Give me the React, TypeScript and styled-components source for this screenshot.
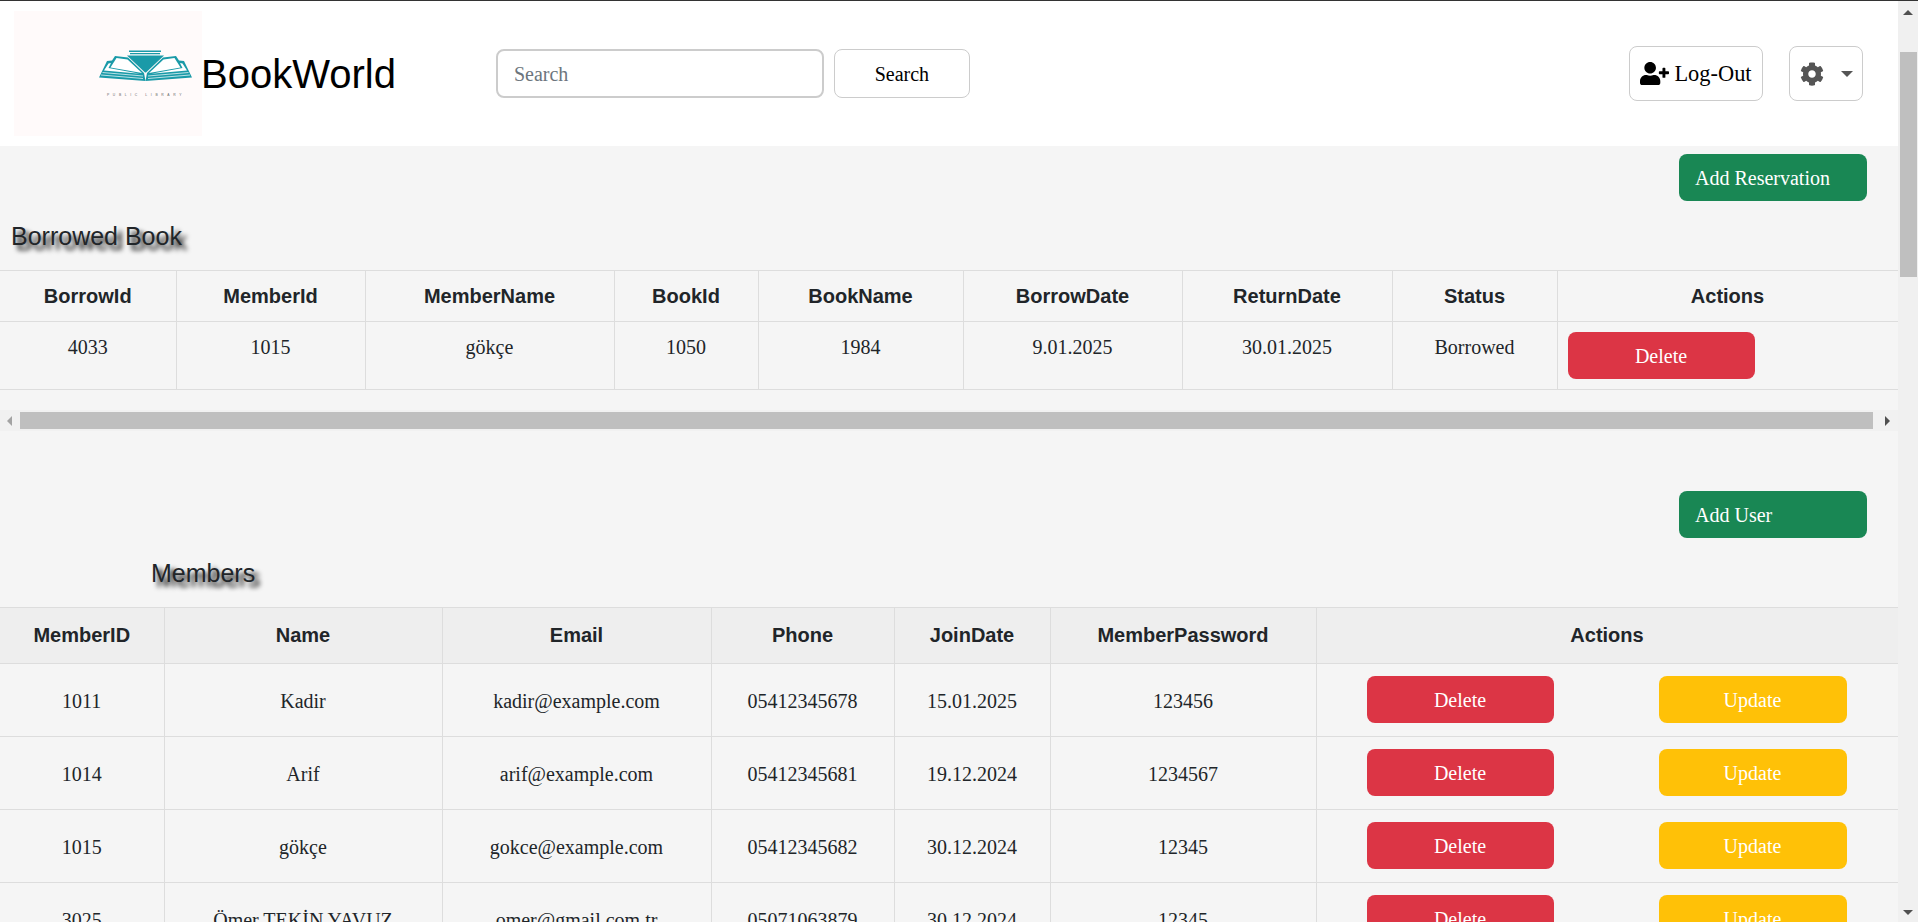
import styled, { createGlobalStyle } from "styled-components";
import { FaCog, FaUserPlus } from "react-icons/fa";

const GlobalStyle = createGlobalStyle`
  * {
    box-sizing: border-box;
  }

  html,
  body {
    margin: 0;
    height: 100%;
    overflow: hidden;
  }

  body {
    font-family: "Liberation Serif", "Times New Roman", serif;
    font-size: 20px;
    line-height: 1.5;
    color: #212529;
    background: #f5f5f5;
  }
`;

const Page = styled.div`
  display: flex;
  height: 922px;
  border-top: 1px solid #333;
`;

const Main = styled.div`
  flex: 1;
  min-width: 0;
  overflow: hidden;
`;

const VScroll = styled.div`
  width: 20px;
  flex: none;
  display: flex;
  flex-direction: column;
  align-items: center;
  padding: 9px 0 7px;
  background: #f0f0f0;
`;

const ArrowUp = styled.span`
  border: 5px solid transparent;
  border-top: 0;
  border-bottom-color: #505050;
`;

const ArrowDown = styled.span`
  margin-top: auto;
  border: 5px solid transparent;
  border-bottom: 0;
  border-top-color: #505050;
`;

const VThumb = styled.div`
  width: 17px;
  height: 225px;
  margin-top: 37px;
  margin-left: 1px;
  background: #bfbfbf;
`;

const Nav = styled.header`
  display: flex;
  align-items: center;
  height: 145px;
  padding: 0 35px 0 14px;
  background: #fff;
`;

const LogoBox = styled.svg`
  display: block;
  width: 188px;
  height: 125px;
  flex: none;
  background: #fffafa;
`;

const Brand = styled.span`
  margin-left: -1px;
  font-family: "Liberation Sans", Arial, sans-serif;
  font-size: 40px;
  line-height: 48px;
  color: #000;
`;

const SearchForm = styled.form`
  display: flex;
  gap: 10px;
  margin-left: 100px;
`;

const SearchInput = styled.input`
  width: 328px;
  height: 49px;
  padding: 2px 16px 0;
  border: 2px solid #ccc;
  border-radius: 8px;
  background: #fff;
  font: inherit;
  outline: none;

  &::placeholder {
    color: #6c757d;
    opacity: 1;
  }
`;

const OutlineButton = styled.button`
  display: flex;
  align-items: center;
  justify-content: center;
  border: 1px solid #ccc;
  border-radius: 8px;
  background: #fff;
  color: #000;
  font: inherit;
`;

const SearchButton = styled(OutlineButton)`
  width: 136px;
  height: 49px;
`;

const NavActions = styled.div`
  display: flex;
  gap: 26px;
  margin-left: auto;
`;

const LogoutButton = styled(OutlineButton)`
  gap: 5px;
  width: 134px;
  height: 55px;
  font-size: 22.4px;
`;

const SettingsButton = styled(OutlineButton)`
  gap: 17px;
  width: 74px;
  height: 55px;
  color: #555;
`;

const Caret = styled.span`
  border: 6px solid transparent;
  border-bottom: 0;
  border-top-color: #555;
`;

const AddRow = styled.div<{ $top: number }>`
  display: flex;
  justify-content: flex-end;
  margin-top: ${(p) => p.$top}px;
  padding-right: 31px;
`;

const Button = styled.button<{ $kind: "add" | "delete" | "update" }>`
  width: ${(p) => (p.$kind === "delete" ? 187 : 188)}px;
  height: 47px;
  padding: 0 16px;
  border: 0;
  border-radius: 8px;
  color: #fff;
  font: inherit;
  text-align: ${(p) => (p.$kind === "add" ? "left" : "center")};
  background: ${(p) =>
    p.$kind === "add" ? "#198754" : p.$kind === "delete" ? "#dc3545" : "#ffc107"};
`;

const Title = styled.h2<{ $indent: number }>`
  margin: 20px 0 0;
  padding-left: ${(p) => p.$indent}px;
  font-family: "Liberation Sans", Arial, sans-serif;
  font-size: 25px;
  font-weight: 400;
  line-height: 30px;
  text-shadow: 5px 5px 5px #000;
`;

const Table = styled.table`
  width: 1898px;
  margin-top: 19px;
  border-collapse: collapse;
  table-layout: fixed;
`;

const Th = styled.th<{ $shaded?: boolean }>`
  height: ${(p) => (p.$shaded ? 56 : 51)}px;
  padding: 0 0 ${(p) => (p.$shaded ? 2 : 0)}px;
  border: 1px solid #ddd;
  background: ${(p) => (p.$shaded ? "#eee" : "transparent")};
  font-family: "Liberation Sans", Arial, sans-serif;
  font-size: 20px;
  font-weight: 700;
  text-align: center;

  &:first-child {
    border-left: 0;
  }
`;

const Td = styled.td<{ $top?: boolean }>`
  height: ${(p) => (p.$top ? 68 : 73)}px;
  padding: ${(p) => (p.$top ? "10px" : "2px 0 0")};
  border: 1px solid #ddd;
  text-align: center;
  vertical-align: ${(p) => (p.$top ? "top" : "middle")};

  &:first-child {
    border-left: 0;
  }
`;

const ActionCell = styled.td`
  height: 68px;
  padding: 10px;
  border: 1px solid #ddd;
  vertical-align: top;
`;

const ActionPair = styled.td`
  height: 73px;
  padding: 0 51px 2px 50px;
  border: 1px solid #ddd;
`;

const PairRow = styled.div`
  display: flex;
  justify-content: space-between;

  button {
    padding-top: 2px;
  }
`;

const HScroll = styled.div`
  display: flex;
  align-items: center;
  height: 21px;
  margin-top: 20px;
  background: #f1f1f1;
`;

const HArrow = styled.span<{ $dir: "left" | "right" }>`
  flex: none;
  margin: ${(p) => (p.$dir === "left" ? "0 8px 0 7px" : "0 8px 0 12px")};
  border: 5px solid transparent;
  ${(p) =>
    p.$dir === "left"
      ? "border-left: 0; border-right-color: #a3a3a3;"
      : "border-right: 0; border-left-color: #505050;"}
`;

const HThumb = styled.div`
  flex: 1;
  height: 17px;
  background: #bfbfbf;
`;

const borrowCols = [176, 189, 249, 144, 205, 219, 210, 165, 341];
const borrowHead = [
  "BorrowId",
  "MemberId",
  "MemberName",
  "BookId",
  "BookName",
  "BorrowDate",
  "ReturnDate",
  "Status",
  "Actions",
];
const borrowRow = ["4033", "1015", "gökçe", "1050", "1984", "9.01.2025", "30.01.2025", "Borrowed"];

const memberCols = [164, 278, 269, 183, 156, 266, 582];
const memberHead = ["MemberID", "Name", "Email", "Phone", "JoinDate", "MemberPassword", "Actions"];
const members = [
  ["1011", "Kadir", "kadir@example.com", "05412345678", "15.01.2025", "123456"],
  ["1014", "Arif", "arif@example.com", "05412345681", "19.12.2024", "1234567"],
  ["1015", "gökçe", "gokce@example.com", "05412345682", "30.12.2024", "12345"],
  ["3025", "Ömer TEKİN YAVUZ", "omer@gmail.com.tr", "05071063879", "30.12.2024", "12345"],
];

function LogoWing() {
  return (
    <>
      <path d="M115 56 L128 57.5 L144 73 L145.5 81 L99 77.5 L107 61 L112 60.5 Z" fill="#1a9aa8" />
      <path d="M116.5 58 L127.5 59.5 L142 73 L110.5 67.5 Z" fill="#fff" />
      <path d="M108.5 63.5 L111 63 L108.5 68 L140 73.8 L104 70.5 Z" fill="#fff" />
      <path d="M102.5 72.5 L143 76 M101 75 L143 78.5" stroke="#fff" strokeWidth="0.7" />
    </>
  );
}

function Logo() {
  return (
    <LogoBox viewBox="14 11 188 125">
      <LogoWing />
      <g transform="translate(291 0) scale(-1 1)">
        <LogoWing />
      </g>
      <path d="M129 50.5h32v1.4h-32zM130 53h30v1.2h-30z" fill="#1a9aa8" />
      <path d="M127 55.5 H164 L146 72.5 L145 72.5 Z" fill="#1a9aa8" />
      <text
        x="146"
        y="96"
        textAnchor="middle"
        fontFamily="Liberation Sans, Arial, sans-serif"
        fontSize="3.4"
        letterSpacing="3.6"
        fill="#666"
      >
        PUBLIC LIBRARY
      </text>
    </LogoBox>
  );
}

export default function App() {
  return (
    <>
      <GlobalStyle />
      <Page>
        <Main>
          <Nav>
            <Logo />
            <Brand>BookWorld</Brand>
            <SearchForm>
              <SearchInput placeholder="Search" />
              <SearchButton type="button">Search</SearchButton>
            </SearchForm>
            <NavActions>
              <LogoutButton>
                <FaUserPlus size={29} color="#000" />
                Log-Out
              </LogoutButton>
              <SettingsButton>
                <FaCog size={24} />
                <Caret />
              </SettingsButton>
            </NavActions>
          </Nav>

          <AddRow $top={8}>
            <Button $kind="add">Add Reservation</Button>
          </AddRow>
          <Title $indent={11}>Borrowed Book</Title>
          <Table>
            <colgroup>
              {borrowCols.map((w, i) => (
                <col key={i} width={w} />
              ))}
            </colgroup>
            <thead>
              <tr>
                {borrowHead.map((h) => (
                  <Th key={h}>{h}</Th>
                ))}
              </tr>
            </thead>
            <tbody>
              <tr>
                {borrowRow.map((c, i) => (
                  <Td $top key={i}>
                    {c}
                  </Td>
                ))}
                <ActionCell>
                  <Button $kind="delete">Delete</Button>
                </ActionCell>
              </tr>
            </tbody>
          </Table>
          <HScroll>
            <HArrow $dir="left" />
            <HThumb />
            <HArrow $dir="right" />
          </HScroll>

          <AddRow $top={60}>
            <Button $kind="add">Add User</Button>
          </AddRow>
          <Title $indent={151}>Members</Title>
          <Table>
            <colgroup>
              {memberCols.map((w, i) => (
                <col key={i} width={w} />
              ))}
            </colgroup>
            <thead>
              <tr>
                {memberHead.map((h) => (
                  <Th $shaded key={h}>
                    {h}
                  </Th>
                ))}
              </tr>
            </thead>
            <tbody>
              {members.map((m) => (
                <tr key={m[0]}>
                  {m.map((c, i) => (
                    <Td key={i}>{c}</Td>
                  ))}
                  <ActionPair>
                    <PairRow>
                      <Button $kind="delete">Delete</Button>
                      <Button $kind="update">Update</Button>
                    </PairRow>
                  </ActionPair>
                </tr>
              ))}
            </tbody>
          </Table>
        </Main>
        <VScroll>
          <ArrowUp />
          <VThumb />
          <ArrowDown />
        </VScroll>
      </Page>
    </>
  );
}
